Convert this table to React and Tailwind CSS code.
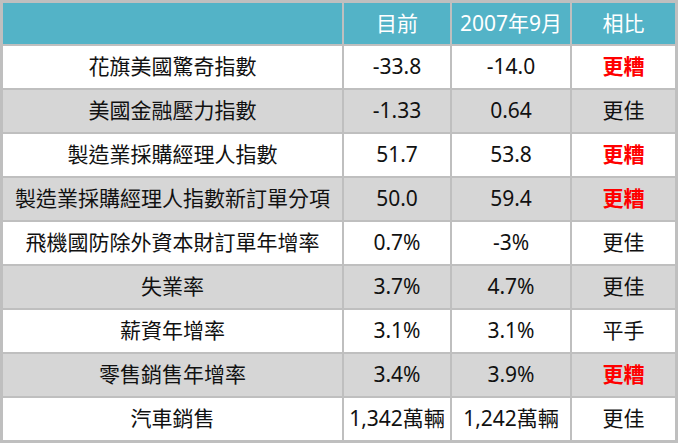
import React from "react";

const rows = [
  ["花旗美國驚奇指數", "-33.8", "-14.0", "更糟"],
  ["美國金融壓力指數", "-1.33", "0.64", "更佳"],
  ["製造業採購經理人指數", "51.7", "53.8", "更糟"],
  ["製造業採購經理人指數新訂單分項", "50.0", "59.4", "更糟"],
  ["飛機國防除外資本財訂單年增率", "0.7%", "-3%", "更佳"],
  ["失業率", "3.7%", "4.7%", "更佳"],
  ["薪資年增率", "3.1%", "3.1%", "平手"],
  ["零售銷售年增率", "3.4%", "3.9%", "更糟"],
  ["汽車銷售", "1,342萬輛", "1,242萬輛", "更佳"],
];

export default function App() {
  return (
    <div className="w-[680px] h-[448px] bg-white">
      <div
        className="w-[678px] grid grid-cols-[339px_106px_118px_103px] grid-rows-[41px_repeat(9,42px)] gap-[2px] border-[3px] border-[#bfbfbf] bg-[#bfbfbf] text-[21px] text-[#111]"
        style={{ fontFamily: '"Noto Sans", "Noto Sans CJK TC", sans-serif' }}
      >
        <div className="bg-[#53b3c7]" />
        <div className="bg-[#53b3c7] text-white flex items-center justify-center">目前</div>
        <div className="bg-[#53b3c7] text-white flex items-center justify-center">2007年9月</div>
        <div className="bg-[#53b3c7] text-white flex items-center justify-center">相比</div>
        {rows.map((r, i) => {
          const bg = i % 2 === 1 ? "bg-[#d6d6d6]" : "bg-white";
          return (
            <React.Fragment key={i}>
              <div className={`${bg} flex items-center justify-center whitespace-nowrap`}>{r[0]}</div>
              <div className={`${bg} flex items-center justify-center whitespace-nowrap`}>{r[1]}</div>
              <div className={`${bg} flex items-center justify-center whitespace-nowrap`}>{r[2]}</div>
              <div
                className={`${bg} flex items-center justify-center whitespace-nowrap ${
                  r[3] === "更糟" ? "text-[#ff0000] font-bold" : ""
                }`}
              >
                {r[3]}
              </div>
            </React.Fragment>
          );
        })}
      </div>
    </div>
  );
}
